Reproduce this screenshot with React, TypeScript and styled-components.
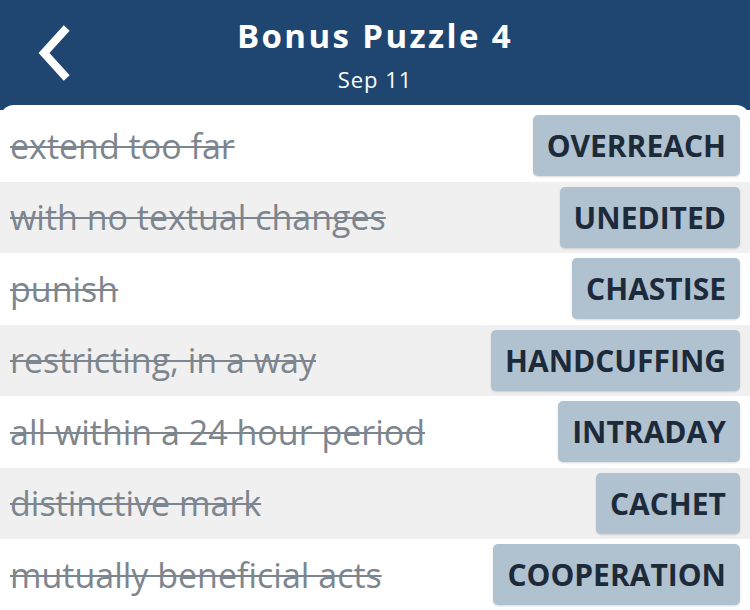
import * as React from 'react'
import styled, { createGlobalStyle } from 'styled-components'

const HEADER_BG = '#1f4670';

const GlobalStyle = createGlobalStyle`
  html, body {
    margin: 0;
    padding: 0;
    background: ${HEADER_BG};
    font-family: "Open Sans", Lato, sans-serif;
  }
`;

interface Clue {
  hint: string,
  answer: string,
}

const CLUES: Clue[] = [
  { hint: 'extend too far', answer: 'OVERREACH' },
  { hint: 'with no textual changes', answer: 'UNEDITED' },
  { hint: 'punish', answer: 'CHASTISE' },
  { hint: 'restricting, in a way', answer: 'HANDCUFFING' },
  { hint: 'all within a 24 hour period', answer: 'INTRADAY' },
  { hint: 'distinctive mark', answer: 'CACHET' },
  { hint: 'mutually beneficial acts', answer: 'COOPERATION' },
];

const Root = styled.div`
  width: 750px;
  height: 610px;
  overflow: hidden;
  display: flex;
  flex-direction: column;
  background: ${HEADER_BG};
`;

const Header = styled.header`
  height: 105px;
  flex-shrink: 0;
  position: relative;
  display: flex;
  flex-direction: column;
  align-items: center;
  color: #fff;
`;

const BackButton = styled.button`
  position: absolute;
  left: 30px;
  top: 22px;
  width: 48px;
  height: 62px;
  padding: 0;
  border: none;
  background: none;
  cursor: pointer;
`;

const Title = styled.h1`
  margin: 14px 0 0;
  font-size: 33px;
  font-weight: 700;
  letter-spacing: 2.4px;
  line-height: 44px;
`;

const Subtitle = styled.div`
  margin-top: 8px;
  font-size: 22px;
  letter-spacing: 1px;
  line-height: 26px;
`;

const Card = styled.main`
  flex: 1;
  background: #fff;
  border-radius: 14px 14px 0 0;
  padding-top: 5px;
`;

const Row = styled.div<{ $shaded: boolean }>`
  height: 71.5px;
  display: flex;
  align-items: center;
  justify-content: space-between;
  padding: 0 10px;
  background: ${(p) => (p.$shaded ? '#f0f0f0' : '#fff')};
`;

const Hint = styled.span`
  font-size: 34px;
  color: #7d858e;
  text-decoration: line-through;
  text-decoration-thickness: 2px;
  white-space: nowrap;
`;

const Answer = styled.span`
  height: 61px;
  padding: 0 14px;
  display: flex;
  align-items: center;
  background: #b0c1d0;
  border-radius: 5px;
  box-shadow: 0 1px 2px rgba(0, 0, 0, 0.15);
  font-size: 30px;
  font-weight: 700;
  color: #1c2a3a;
`;

const App: React.FC = () => {
  return (
    <Root>
      <GlobalStyle />
      <Header>
        <BackButton aria-label="Back">
          <svg width="48" height="62" viewBox="0 0 48 62">
            <path
              d="M34 9 L14 31 L34 53"
              fill="none"
              stroke="#fff"
              strokeWidth="8"
              strokeLinecap="square"
              strokeLinejoin="miter"
            />
          </svg>
        </BackButton>
        <Title>Bonus Puzzle 4</Title>
        <Subtitle>Sep 11</Subtitle>
      </Header>
      <Card>
        {CLUES.map((c, i) => (
          <Row key={c.answer} $shaded={i % 2 === 1}>
            <Hint>{c.hint}</Hint>
            <Answer>{c.answer}</Answer>
          </Row>
        ))}
      </Card>
    </Root>
  )
}

export default App
